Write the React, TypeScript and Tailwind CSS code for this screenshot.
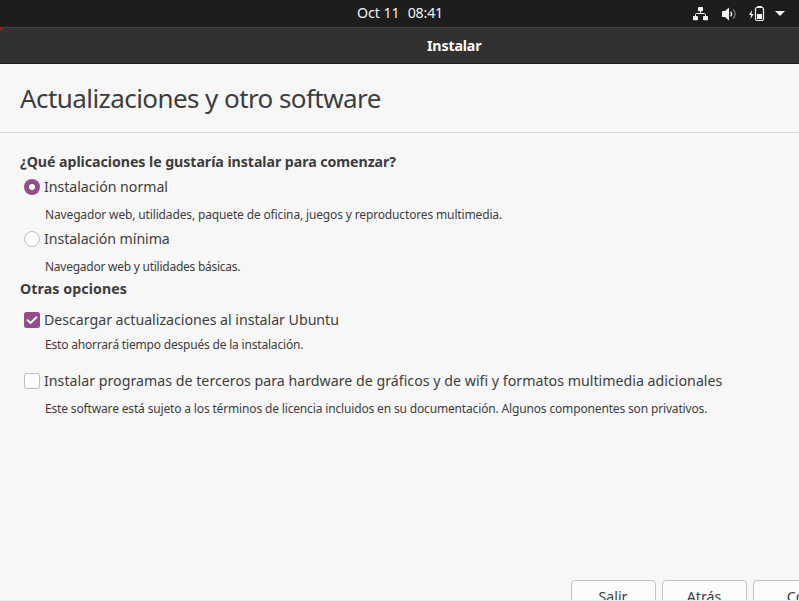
import type { ReactNode } from "react";

function NetworkIcon() {
  return (
    <svg className="h-4 w-4 shrink-0" viewBox="0 0 16 16" fill="#f2f2f2">
      <rect x="5" y="1" width="5" height="4.2" rx="0.8" />
      <rect x="0" y="10" width="5" height="4.2" rx="0.8" />
      <rect x="10" y="10" width="5" height="4.2" rx="0.8" />
      <path d="M7.5 5v2.5M2.5 10.5V8.6Q2.500 7.5 3.6 7.5H11.4Q12.5 7.5 12.5 8.6V10.5" fill="none" stroke="#f2f2f2" strokeWidth="1" />
    </svg>
  );
}

function VolumeIcon() {
  return (
    <svg className="h-4 w-4 shrink-0" viewBox="0 0 16 16">
      <path d="M0 5.5Q0 5 .6 5H3L7 1.400V14.6L3 11H.6Q0 11 0 10.5Z" fill="#f2f2f2" />
      <path d="M8.600 5.6Q10.6 8 8.6 10.4" fill="none" stroke="#f2f2f2" strokeWidth="1.3" />
      <path d="M11 3.4Q15.2 8 11 12.6" fill="none" stroke="#777" strokeWidth="1.3" />
    </svg>
  );
}

function BatteryIcon() {
  return (
    <svg className="h-4 w-4 shrink-0" viewBox="0 0 16 16">
      <path d="M3 4L0 9H2L1.5 13L4.6 8H2.6Z" fill="#f2f2f2" />
      <path d="M6.5 3Q6.5 1.5 8 1.5H13Q14.5 1.5 14.5 3V13Q14.5 14.5 13 14.5H8Q6.5 14.5 6.5 13Z" fill="none" stroke="#f2f2f2" strokeWidth="1.2" />
      <rect x="8" y="0" width="5" height="2" rx="0.5" fill="#f2f2f2" />
      <rect x="8" y="8" width="5" height="5" fill="#f2f2f2" />
    </svg>
  );
}

function Option({ control, className, children }: { control: ReactNode; className: string; children: ReactNode }) {
  return (
    <label className={`flex h-[21px] items-center gap-1 pl-6 ${className}`}>
      {control}
      <span className="leading-[21px]">{children}</span>
    </label>
  );
}

export default function App() {
  return (
    <div className="flex h-[601px] w-[799px] flex-col overflow-hidden bg-[#f7f7f7] font-['Noto_Sans',sans-serif] text-[14.2px] whitespace-nowrap text-[#3d3d3d]">
      <header className="flex h-[27px] shrink-0 items-center bg-[#1d1d1d] pl-[357px] text-[#f2f2f2]">
        <div className="flex w-[336px] items-center gap-[8px] pb-px leading-[26px]">
          <span className="tracking-[-0.04px]">Oct 11</span>
          <span className="tracking-[-0.2px]">08:41</span>
        </div>
        <NetworkIcon />
        <div className="ml-[13px] flex"><VolumeIcon /></div>
        <div className="ml-[11px] flex"><BatteryIcon /></div>
        <svg className="ml-[10px] h-[5px] w-[10px]" viewBox="0 0 10 5" fill="#f2f2f2"><path d="M0 0H10L5 5Z" /></svg>
      </header>

      <div className="h-[37px] shrink-0 bg-[#a51d1d]">
        <div className="flex h-full items-center rounded-tl-[5px] border-t border-b border-t-[#454343] border-b-[#211e1e] bg-[#323030] pl-[427px] font-bold text-white">
          <span className="leading-5 tracking-[-0.15px]">Instalar</span>
        </div>
      </div>

      <div className="flex h-[69px] shrink-0 items-center border-b border-[#dcdcdc] pl-5">
        <h1 className="pb-px text-[26px] leading-9 tracking-[-0.57px]">Actualizaciones y otro software</h1>
      </div>

      <main className="flex flex-1 flex-col pt-[18px]">
        <h2 className="h-[21px] pl-[20px] leading-[21px] font-bold tracking-[-0.06px]">¿Qué aplicaciones le gustaría instalar para comenzar?</h2>
        <Option
          className="mt-1 tracking-[-0.04px]"
          control={<span className="flex h-4 w-4 items-center justify-center rounded-full bg-[#924d8b]"><span className="h-[6px] w-[6px] rounded-full bg-white" /></span>}
        >
          Instalación normal
        </Option>
        <p className="mt-[7px] h-[21px] pl-[45px] text-[12px] leading-[21px] tracking-[-0.145px]">Navegador web, utilidades, paquete de oficina, juegos y reproductores multimedia.</p>
        <Option
          className="mt-[3px] tracking-[-0.08px]"
          control={<span className="h-4 w-4 rounded-full border border-[#bdbdbd] bg-white" />}
        >
          Instalación mínima
        </Option>
        <p className="mt-[7px] h-[21px] pl-[45px] text-[12px] leading-[21px] tracking-[-0.25px]">Navegador web y utilidades básicas.</p>
        <h2 className="mt-px h-[21px] pl-[20px] leading-[21px] font-bold tracking-[0.09px]">Otras opciones</h2>
        <Option
          className="mt-[10px] tracking-[-0.025px]"
          control={
            <svg className="h-4 w-4 rounded-[2.5px] bg-[#924d8b]" viewBox="0 0 16 16" fill="none" stroke="white" strokeWidth="1.9">
              <path d="M3 7.6L6.6 11L13 4.7" />
            </svg>
          }
        >
          Descargar actualizaciones al instalar Ubuntu
        </Option>
        <p className="mt-[4px] h-[21px] pl-[45px] text-[12px] leading-[21px] tracking-[-0.19px]">Esto ahorrará tiempo después de la instalación.</p>
        <Option
          className="mt-[15px] tracking-[0.015px]"
          control={<span className="h-4 w-4 rounded-[3px] border border-[#bdbdbd] bg-white" />}
        >
          Instalar programas de terceros para hardware de gráficos y de wifi y formatos multimedia adicionales
        </Option>
        <p className="mt-[7px] h-[21px] pl-[45px] text-[12px] leading-[21px] tracking-[-0.155px]">Este software está sujeto a los términos de licencia incluidos en su documentación. Algunos componentes son privativos.</p>
      </main>

      <footer className="h-[21px] shrink-0 border-b border-[#ececec]">
        <div className="flex h-5 gap-[6px] overflow-hidden pl-[571px]">
          <button className="h-[34px] w-[85px] shrink-0 rounded-[4px] border border-[#c3c3c3] bg-[#fcfcfc] pr-px leading-8">Salir</button>
          <button className="h-[34px] w-[85px] shrink-0 rounded-[4px] border border-[#c3c3c3] bg-[#fcfcfc] pr-px leading-8">Atrás</button>
          <button className="h-[34px] w-[134px] shrink-0 rounded-[4px] border border-[#c3c3c3] bg-[#fcfcfc] leading-8">Continuar</button>
        </div>
      </footer>
    </div>
  );
}
